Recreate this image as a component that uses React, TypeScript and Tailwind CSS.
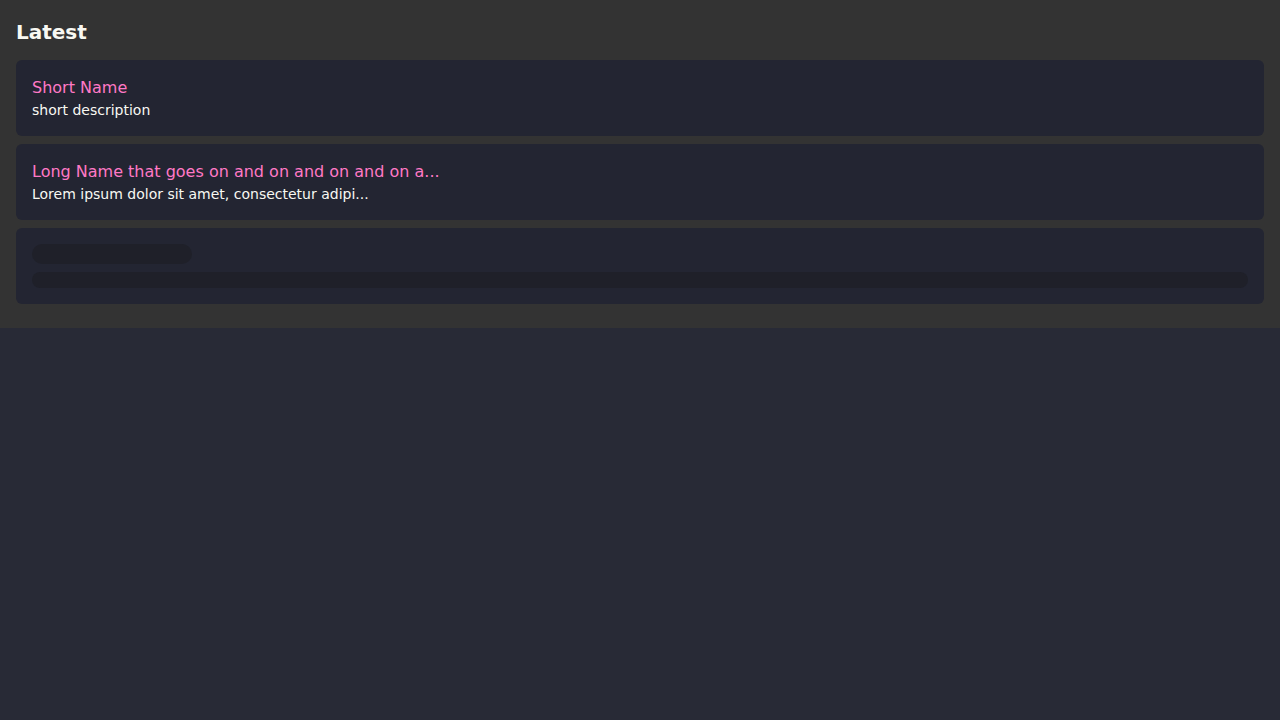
const items = [
  { id: 1, name: "Short Name", description: "short description" },
  {
    id: 2,
    name: "Long Name that goes on and on and on and on and on and on and on and on and on",
    description:
      "Lorem ipsum dolor sit amet, consectetur adipiscing elit, sed do eiusmod tempor incididunt",
  },
];

const truncate = (text: string, max: number) =>
  text.length > max ? text.slice(0, max) + "..." : text;

const App = () => {
  return (
    <div className="min-h-screen bg-[#282a36] font-['DejaVu_Sans',sans-serif]">
      <section className="bg-[#333333] px-4 pt-[18px] pb-6">
        <h2 className="text-xl font-bold text-[#f8f8f2] mb-[14px]">Latest</h2>
        <div className="flex flex-col gap-2">
          {items.map((item) => (
            <div key={item.id} className="bg-[#232532] rounded-md p-4">
              <div className="text-base text-[#ff79c6]">{truncate(item.name, 45)}</div>
              <div className="text-sm text-[#f8f8f2]">{truncate(item.description, 45)}</div>
            </div>
          ))}
          <div className="bg-[#232532] rounded-md p-4">
            <div className="h-5 w-40 rounded-full bg-[#1f2029]" />
            <div className="h-4 w-full rounded-full bg-[#1f2029] mt-2" />
          </div>
        </div>
      </section>
    </div>
  );
};

export default App;
